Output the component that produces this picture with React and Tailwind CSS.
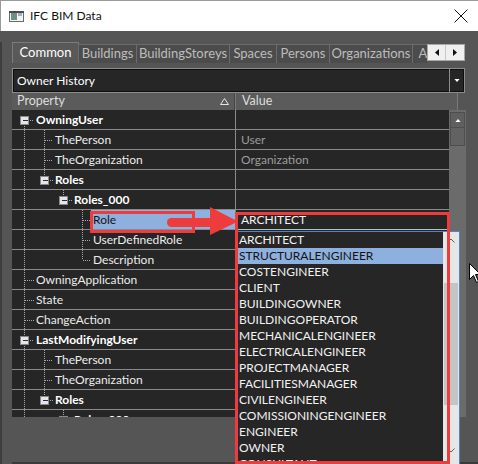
import React from 'react';

const X = [12, 32, 51, 70];
const INDENT = [24, 43, 62, 81];

const rows = [
  { label: 'OwningUser', level: 0, box: true, bold: true, first: true },
  { label: 'ThePerson', level: 1, pass: [0], value: 'User' },
  { label: 'TheOrganization', level: 1, pass: [0], value: 'Organization' },
  { label: 'Roles', level: 1, box: true, bold: true, pass: [0], last: true },
  { label: 'Roles_000', level: 2, box: true, bold: true, pass: [0], last: true },
  { label: 'Role', level: 3, pass: [0], selected: true },
  { label: 'UserDefinedRole', level: 3, pass: [0] },
  { label: 'Description', level: 3, pass: [0], last: true },
  { label: 'OwningApplication', level: 0 },
  { label: 'State', level: 0 },
  { label: 'ChangeAction', level: 0 },
  { label: 'LastModifyingUser', level: 0, box: true, bold: true },
  { label: 'ThePerson', level: 1, pass: [0] },
  { label: 'TheOrganization', level: 1, pass: [0] },
  { label: 'Roles', level: 1, box: true, bold: true, pass: [0], last: true },
  { label: 'Roles_000', level: 2, box: true, bold: true, pass: [0], last: true },
];

const roles = [
  'ARCHITECT', 'STRUCTURALENGINEER', 'COSTENGINEER', 'CLIENT', 'BUILDINGOWNER',
  'BUILDINGOPERATOR', 'MECHANICALENGINEER', 'ELECTRICALENGINEER', 'PROJECTMANAGER',
  'FACILITIESMANAGER', 'CIVILENGINEER', 'COMISSIONINGENGINEER', 'ENGINEER', 'OWNER', 'CONSULTANT',
];

const tabs = [
  { label: 'Common', w: 'w-[67px]', active: true },
  { label: 'Buildings', w: 'w-[59px]' },
  { label: 'BuildingStoreys', w: 'w-[94px]' },
  { label: 'Spaces', w: 'w-[48px]' },
  { label: 'Persons', w: 'w-[54px]' },
  { label: 'Organizations', w: 'w-[84px]' },
  { label: 'Actors', w: 'w-[50px]' },
];

function TreeGutter({ row }) {
  const w = INDENT[row.level] - 2;
  const x = X[row.level] + 0.5;
  const dot = { stroke: '#a8a8a8', strokeWidth: 1, strokeDasharray: '1 1', shapeRendering: 'crispEdges' };
  const y1 = row.first ? 10 : 0;
  const y2 = row.last ? 10 : 19;
  return (
    <svg width={w} height="19" className="shrink-0">
      {(row.pass || []).map(p => (
        <line key={p} x1={X[p] + 0.5} y1="0" x2={X[p] + 0.5} y2="19" style={dot} />
      ))}
      <line x1={x} y1={y1} x2={x} y2={y2} style={dot} />
      <line x1={row.box ? x + 5 : x} y1="10.5" x2={w} y2="10.5" style={dot} />
      {row.box && (
        <g shapeRendering="crispEdges">
          <rect x={x - 4} y="6.5" width="8" height="8" fill="#e6e6e6" stroke="#8a8a8a" />
          <line x1={x - 2} y1="10.5" x2={x + 3} y2="10.5" stroke="#1c2a55" />
        </g>
      )}
    </svg>
  );
}

function GridRow({ row }) {
  return (
    <div className="flex h-[20px] border-b border-[#8a8a8a]">
      <div className="flex w-[223px] shrink-0 overflow-hidden">
        <TreeGutter row={row} />
        <div className={`flex-1 pl-[2px] leading-[19px] whitespace-nowrap ${row.selected ? 'bg-[#8db0df] text-[#141414]' : 'text-[#ececec]'} ${row.bold ? 'font-bold text-white' : ''}`}>
          {row.label}
        </div>
      </div>
      <div className="flex-1 border-l border-[#8a8a8a] pl-[5px] leading-[19px] text-[#9c9c9c]">
        {row.selected ? (
          <div className="mt-[2px] -ml-[5px] h-[18px] border-r border-b border-[#c0c0c0] bg-[#262626] pl-[5px] leading-[16px] text-[#f2f2f2]">
            ARCHITECT
          </div>
        ) : row.value}
      </div>
    </div>
  );
}

function Triangle({ dir, color = '#fff', size = 'w-[7px] h-[4px]' }) {
  const pts = dir === 'up' ? '0,4 3.5,0 7,4' : '0,0 7,0 3.5,4';
  return (
    <svg viewBox="0 0 7 4" className={size}>
      <polygon points={pts} fill={color} />
    </svg>
  );
}

function RoleList() {
  return (
    <div className="absolute left-[236px] top-[231px] w-[224px] h-[240px] flex bg-[#262626] border border-[#4f86c9]">
      <div className="flex-1 overflow-hidden">
        {roles.map((r, i) => (
          <div key={r} className={`h-[16px] pl-[2px] leading-[16px] whitespace-nowrap ${i === 1 ? 'bg-[#8db0df] text-[#141414]' : 'text-[#f2f2f2]'}`}>
            {r}
          </div>
        ))}
      </div>
      <div className="w-[16px] bg-[#e6e6e6] flex flex-col">
        <div className="h-[17px] flex items-center justify-center">
          <svg width="8" height="5"><polyline points="0.5,4.5 4,1 7.5,4.5" fill="none" stroke="#606060" /></svg>
        </div>
        <div className="mt-[34px] h-[122px] mx-[1px] bg-[#c4c4c4]" />
        <div className="flex-1" />
        <div className="h-[30px] flex items-start justify-center pt-[8px]">
          <svg width="8" height="5"><polyline points="0.5,0.5 4,4 7.5,0.5" fill="none" stroke="#606060" /></svg>
        </div>
      </div>
    </div>
  );
}

export default function App() {
  return (
    <div className="relative w-[478px] h-[464px] overflow-hidden font-['Lato',sans-serif] text-[12px] bg-[#555555]">
      {/* title bar */}
      <div className="h-[31px] bg-white flex items-center border-t border-l border-[#9a9a9a]">
        <svg width="15" height="11" className="ml-[8px]" shapeRendering="crispEdges">
          <rect x="0.5" y="0.5" width="14" height="10" fill="#f4f4f4" stroke="#6a6a6a" />
          <rect x="2" y="2" width="6" height="7" fill="#6f8f86" />
          <rect x="9" y="2" width="4" height="3" fill="#9bb2c4" />
          <rect x="0" y="0" width="15" height="2" fill="#4b4b4b" />
        </svg>
        <span className="ml-[6px] text-[12px] text-[#111]">IFC BIM Data</span>
        <svg width="14" height="14" className="ml-auto mr-[10px]">
          <line x1="0.5" y1="0.5" x2="13.5" y2="13.5" stroke="#111" />
          <line x1="13.5" y1="0.5" x2="0.5" y2="13.5" stroke="#111" />
        </svg>
      </div>

      {/* body */}
      <div className="h-[433px] pl-[10px] border-l-2 border-[#3e3e3e]">
        {/* tabs */}
        <div className="mt-[11px] h-[21px] w-[453px] flex items-end">
          <div className="w-[416px] flex items-end overflow-hidden">
            {tabs.map(t => (
              <div
                key={t.label}
                className={`${t.w} shrink-0 flex items-center justify-center text-[13px] whitespace-nowrap border border-b-0 ${t.active ? 'h-[21px] bg-[#595959] border-[#7c7c7c] text-white' : 'h-[19px] bg-[#4c4c4c] border-[#6c6c6c] text-[#bcbcbc] -ml-px'}`}
              >
                {t.label}
              </div>
            ))}
          </div>
          <div className="self-start mt-[2px] ml-auto flex h-[17px] border border-[#a9a9a9] bg-[#f0f0f0]">
            <div className="w-[18px] flex items-center justify-center border-r border-[#c8c8c8]">
              <svg width="4" height="7"><polygon points="4,0 0,3.5 4,7" fill="#111" /></svg>
            </div>
            <div className="w-[18px] flex items-center justify-center">
              <svg width="4" height="7"><polygon points="0,0 4,3.5 0,7" fill="#111" /></svg>
            </div>
          </div>
        </div>

        {/* owner history combo */}
        <div className="mt-[5px] h-[25px] w-[453px] flex border border-[#8c8c8c] bg-[#262626] shadow-[inset_0_0_0_1px_#0e0e0e]">
          <div className="flex-1 pl-[4px] leading-[23px] text-[12px] text-white">Owner History</div>
          <div className="w-[15px] border-l border-[#8c8c8c] flex items-center justify-center">
            <Triangle dir="down" size="w-[6px] h-[3px]" />
          </div>
        </div>

        {/* header */}
        <div className="h-[17px] w-[446px] flex bg-[#5b5b5b] border-r border-[#7a7a7a] text-[#dedede] text-[12.5px]">
          <div className="w-[223px] shrink-0 flex items-center pl-[5px] border-r border-[#454545]">
            <span>Property</span>
            <svg width="9" height="7" className="ml-auto mr-[5px]">
              <polygon points="0.5,6.5 4.5,0.5 8.5,6.5" fill="none" stroke="#e6e6e6" />
            </svg>
          </div>
          <div className="flex-1 flex items-center pl-[6px] border-l border-[#7a7a7a]">Value</div>
        </div>

        {/* grid */}
        <div className="h-[307px] w-[454px] flex">
          <div className="w-[437px] bg-[#262626] overflow-hidden">
            {rows.map((r, i) => <GridRow key={i} row={r} />)}
          </div>
          <div className="w-[17px] bg-[#6b6b6b] flex flex-col pt-[2px]">
            <div className="h-[16px] mx-[1px] bg-[#5f5f5f] border border-[#4e4e4e] flex items-center justify-center">
              <Triangle dir="up" size="w-[6px] h-[3px]" />
            </div>
            <div className="h-[18px] mx-[1px] bg-[#626262] border border-[#4e4e4e] border-t-0" />
          </div>
        </div>

        <div className="h-[45px]" />
        <div className="h-[3px] bg-[#3a3a3a]" />
      </div>

      {/* dropdown list */}
      <RoleList />

      {/* annotations */}
      <div className="absolute left-[235px] top-[212px] w-[215px] h-[252px] border-[3px] border-[#ee3b3b]" />
      <div className="absolute left-[90px] top-[211px] w-[105px] h-[22px] border-[3px] border-[#ee3b3b]" />
      <svg className="absolute left-[160px] top-[203px]" width="82" height="36">
        <rect x="7" y="15" width="52" height="9" rx="4.5" fill="#ee3b3b" />
        <polygon points="50,4 78,18.5 50,32" fill="#ee3b3b" />
      </svg>

      {/* mouse cursor */}
      <svg className="absolute left-[469px] top-[263px]" width="13" height="21">
        <path d="M0.5 0.5 L0.5 16.5 L4.5 12.5 L7.5 19.5 L9.5 18.5 L6.5 11.5 L11.5 11.5 Z" fill="#fff" stroke="#000" />
      </svg>
    </div>
  );
}
